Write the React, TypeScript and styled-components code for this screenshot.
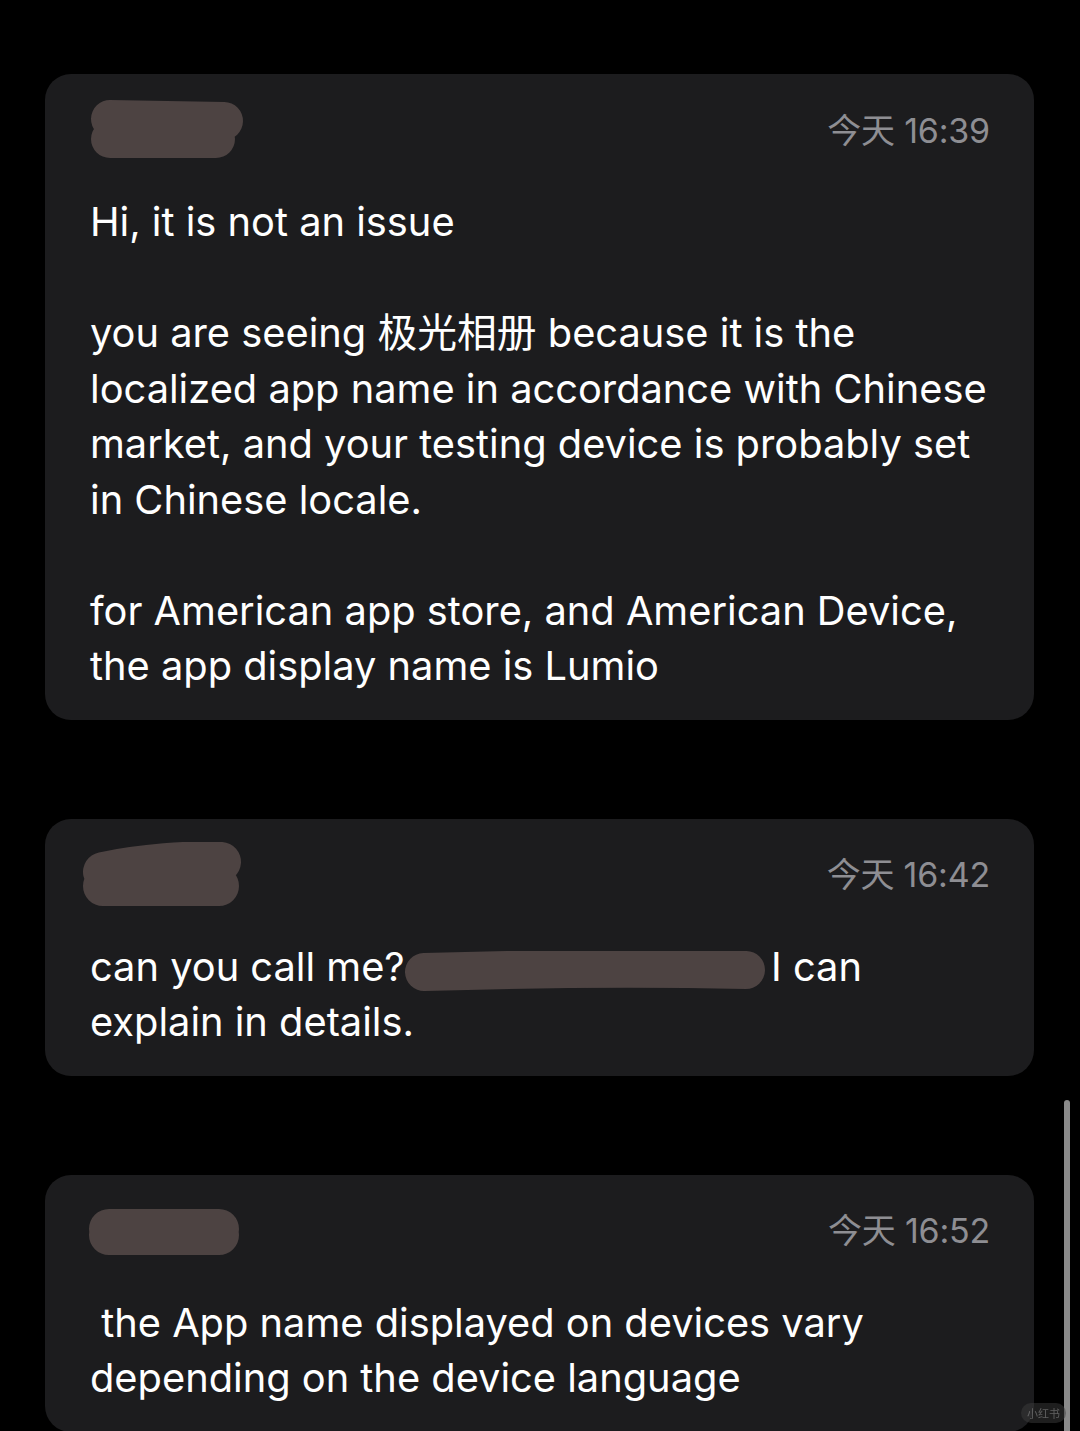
import React from 'react';
import styled, { createGlobalStyle } from 'styled-components';

const GlobalStyle = createGlobalStyle`
  html, body {
    margin: 0;
    padding: 0;
    background: #000;
  }
  body {
    font-family: "Inter", "Noto Sans CJK SC", sans-serif;
    -webkit-font-smoothing: antialiased;
  }
`;

const blobColor = '#4d4342';

interface Message {
  time: string;
  blob: { w: number; h: number; d: string; sw: number; shift: number };
  lines: React.ReactNode[];
}

const InlineRedaction = () => (
  <InlineBlob viewBox="0 0 362 42" width={362} height={42}>
    <path
      d="M20 21 C 120 18, 240 17, 342 19"
      stroke={blobColor}
      strokeWidth={38}
      strokeLinecap="round"
      fill="none"
    />
  </InlineBlob>
);

const messages: Message[] = [
  {
    time: '今天 16:39',
    blob: { w: 160, h: 62, d: 'M22 20 L136 22 M22 40 L128 40 M40 32 L100 32', sw: 38, shift: -2 },
    lines: [
      'Hi, it is not an issue',
      '',
      'you are seeing 极光相册 because it is the',
      'localized app name in accordance with Chinese',
      'market, and your testing device is probably set',
      'in Chinese locale.',
      '',
      'for American app store, and American Device,',
      'the app display name is Lumio',
    ],
  },
  {
    time: '今天 16:42',
    blob: { w: 162, h: 66, d: 'M22 30 C 60 22, 110 18, 140 20 M22 44 L138 44', sw: 40, shift: -9 },
    lines: [
      <>
        can you call me? <InlineRedaction /> I can
      </>,
      'explain in details.',
    ],
  },
  {
    time: '今天 16:52',
    blob: { w: 154, h: 48, d: 'M22 22 L132 22 M22 28 L132 28', sw: 40, shift: -3 },
    lines: [' the App name displayed on devices vary', 'depending on the device language'],
  },
];

export default function App() {
  return (
    <>
      <GlobalStyle />
      <Page>
        {messages.map((m) => (
          <Card key={m.time}>
            <Header>
              <NameBlob
                viewBox={`0 0 ${m.blob.w} ${m.blob.h}`}
                width={m.blob.w}
                height={m.blob.h}
                $shift={m.blob.shift}
              >
                <path
                  d={m.blob.d}
                  stroke={blobColor}
                  strokeWidth={m.blob.sw}
                  strokeLinecap="round"
                  strokeLinejoin="round"
                  fill="none"
                />
              </NameBlob>
              <Time>{m.time}</Time>
            </Header>
            <Body>
              {m.lines.map((line, i) => (
                <Line key={i}>{line === '' ? '\u00a0' : line}</Line>
              ))}
            </Body>
          </Card>
        ))}
      </Page>
      <ScrollThumb />
      <Watermark>小红书</Watermark>
    </>
  );
}

const Page = styled.main`
  display: flex;
  flex-direction: column;
  gap: 99px;
  padding: 74px 46px 0 45px;
  height: 1431px;
  box-sizing: border-box;
  overflow: hidden;
`;

const Card = styled.section`
  flex-shrink: 0;
  background: #1c1c1e;
  border-radius: 26px;
  padding: 28px 44px 26px 45px;
`;

const Header = styled.header`
  display: flex;
  align-items: center;
  justify-content: space-between;
  height: 56px;
`;

const NameBlob = styled.svg<{ $shift: number }>`
  display: block;
  margin-left: ${(p) => p.$shift}px;
`;

const Time = styled.span`
  font-size: 34px;
  color: #8e8e93;
  letter-spacing: -0.2px;
  margin-bottom: 4px;
`;

const Body = styled.div`
  margin-top: 36px;
  color: #fff;
  font-size: 39.8px;
  line-height: 55.5px;
  letter-spacing: 0;
`;

const Line = styled.div`
  white-space: pre;
`;

const InlineBlob = styled.svg`
  display: inline-block;
  vertical-align: -12px;
  margin: 0 -6px 0 -12px;
`;

const ScrollThumb = styled.div`
  position: fixed;
  right: 10px;
  top: 1100px;
  width: 6px;
  height: 340px;
  border-radius: 3px;
  background: #8a8a8a;
`;

const Watermark = styled.div`
  position: fixed;
  right: 14px;
  bottom: 8px;
  padding: 2px 6px;
  border-radius: 10px;
  background: rgba(60, 60, 60, 0.5);
  color: rgba(140, 140, 140, 0.6);
  font-size: 11px;
  font-family: "Noto Sans CJK SC", sans-serif;
`;
